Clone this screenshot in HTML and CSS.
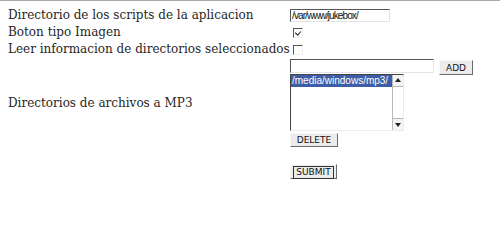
FILE: index.html
```html
<!DOCTYPE html>
<html lang="es">
<head>
  <meta charset="UTF-8" />
  <title>Configuracion del jukebox</title>
  <link rel="stylesheet" href="styles.css">
</head>
<body>

  <form class="config" onsubmit="return false">
    <table class="settings">
      <tr class="row-path">
        <td class="label">Directorio de los scripts de la aplicacion</td>
        <td><input type="text" class="field field-path" value="/var/www/jukebox/" /></td>
      </tr>
      <tr class="row-image">
        <td class="label">Boton tipo Imagen</td>
        <td><input type="checkbox" class="check" checked /></td>
      </tr>
      <tr class="row-read">
        <td class="label">Leer informacion de directorios seleccionados</td>
        <td><input type="checkbox" class="check" /></td>
      </tr>
      <tr class="row-dirs">
        <td class="label">Directorios de archivos a MP3</td>
        <td>
          <div class="add-line">
            <input type="text" class="field field-dir" />
            <button type="button" class="btn btn-add">ADD</button>
          </div>
          <div class="listbox">
            <div class="options">
              <div class="option selected">/media/windows/mp3/</div>
            </div>
            <div class="scrollbar">
              <div class="arrow arrow-up"></div>
              <div class="track"></div>
              <div class="arrow arrow-down"></div>
            </div>
          </div>
          <button type="button" class="btn btn-delete">DELETE</button>
        </td>
      </tr>
      <tr class="row-submit">
        <td class="label"></td>
        <td>
          <button type="submit" class="btn btn-submit"><span>SUBMIT</span></button>
        </td>
      </tr>
    </table>
  </form>

</body>
</html>
```

FILE: styles.css
```css
html {
  border-top: 1px solid #a8a8a8;
  background: #fff;
}

body {
  margin: 8px 8px 0 8px;
  font-family: 'DejaVu Serif', serif;
  font-size: 12px;
  color: #262626;
}

.settings {
  border-collapse: collapse;
  border-spacing: 0;
  table-layout: fixed;
  width: 482px;
}

.settings td {
  padding: 0;
  vertical-align: middle;
  line-height: 13px;
}

.settings td.label {
  width: 282px;
  white-space: nowrap;
}

.row-path td { height: 13px; }
.row-image td { height: 21px; }
.row-read td { height: 13px; }
.row-dirs td { height: 94px; }

.row-submit td {
  vertical-align: top;
  padding-top: 14px;
}

.field {
  box-sizing: border-box;
  display: block;
  margin: 0;
  padding: 0 1px;
  font-family: 'Liberation Sans', sans-serif;
  font-size: 10px;
  line-height: 11px;
  letter-spacing: -0.9px;
  color: #111;
  background: #fff;
  border-style: solid;
  border-width: 1px;
  border-color: #555 #e4e4e4 #e4e4e4 #555;
  outline: none;
}

.field-path {
  width: 100px;
  height: 13px;
}

.check {
  appearance: none;
  -webkit-appearance: none;
  box-sizing: border-box;
  display: block;
  position: relative;
  width: 10px;
  height: 10px;
  margin: 0 0 0 3px;
  border-style: solid;
  border-width: 1px;
  border-color: #555 #f0f0f0 #f0f0f0 #555;
  background: #fff;
}

.check:checked::after {
  content: "";
  position: absolute;
  left: 2px;
  top: 1px;
  width: 3px;
  height: 4px;
  border-right: 1px solid #222;
  border-bottom: 1px solid #222;
  transform: rotate(40deg);
}

.add-line {
  display: flex;
  align-items: flex-start;
  gap: 5px;
  height: 15px;
}

.field-dir {
  width: 144px;
  height: 14px;
}

.btn {
  box-sizing: border-box;
  margin: 0;
  padding: 0;
  font-family: 'DejaVu Sans', sans-serif;
  font-size: 9px;
  color: #111;
  background: #ececec;
  border-style: solid;
  border-width: 1px;
  border-color: #f8f8f8 #6a6a6a #6a6a6a #f8f8f8;
  cursor: pointer;
}

.btn-add {
  width: 34px;
  height: 15px;
  margin-top: 1px;
}

.listbox {
  box-sizing: border-box;
  display: flex;
  width: 114px;
  height: 57px;
  border-style: solid;
  border-width: 1px;
  border-color: #444 #ececec #ececec #444;
  background: #fff;
}

.options {
  flex: 1;
}

.option {
  font-family: 'Liberation Sans', sans-serif;
  font-size: 10px;
  line-height: 12px;
  padding-left: 1px;
  white-space: nowrap;
}

.option.selected {
  background: #3d5ea6;
  color: #fff;
}

.scrollbar {
  width: 10px;
  display: flex;
  flex-direction: column;
  background: #fff;
  border-left: 1px solid #b8b8b8;
}

.arrow {
  position: relative;
  height: 11px;
  background: #f4f4f4;
  border-bottom: 1px solid #b8b8b8;
}

.arrow-down {
  border-bottom: none;
  border-top: 1px solid #b8b8b8;
}

.arrow::after {
  content: "";
  position: absolute;
  left: 2px;
  top: 3px;
  border-left: 3px solid transparent;
  border-right: 3px solid transparent;
}

.arrow-up::after {
  border-bottom: 4px solid #222;
}

.arrow-down::after {
  top: 4px;
  border-top: 4px solid #222;
}

.track {
  flex: 1;
}

.btn-delete {
  display: block;
  width: 48px;
  height: 14px;
  margin-top: 2px;
}

.btn-submit {
  display: block;
  width: 47px;
  height: 15px;
  padding: 1px 2px;
}

.btn-submit span {
  display: block;
  height: 11px;
  line-height: 11px;
  border: 1px solid #333;
}
```
